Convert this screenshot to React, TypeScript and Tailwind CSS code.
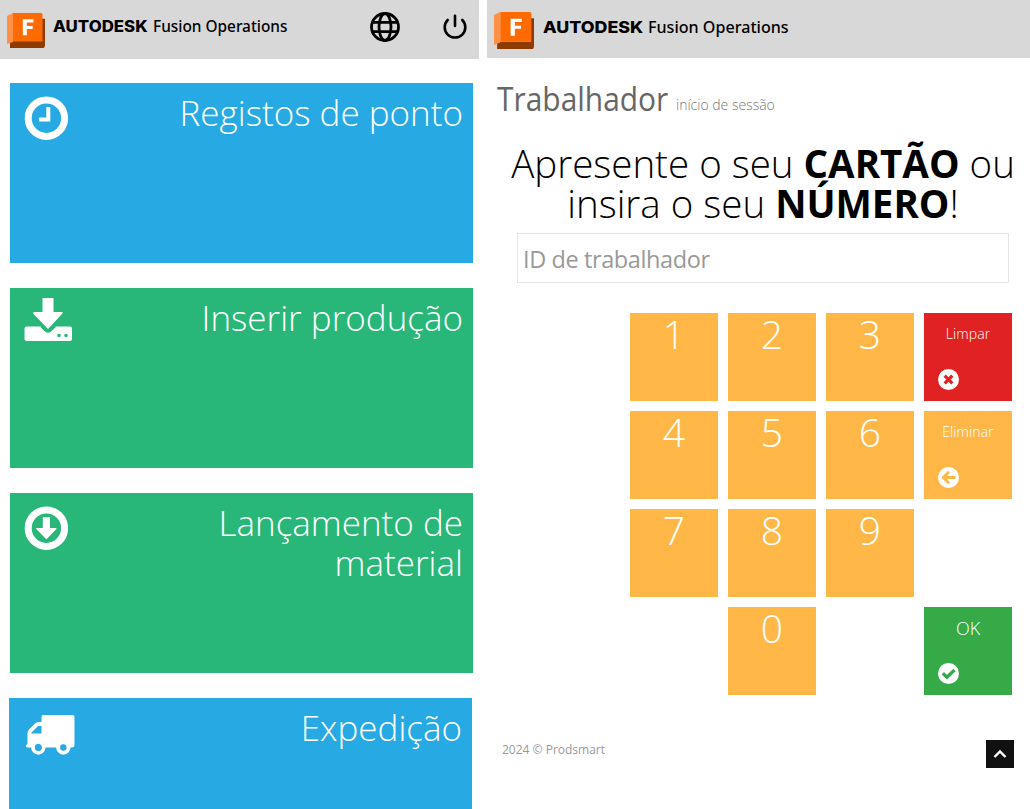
import React from "react";

const openSans = "font-['Open_Sans','Liberation_Sans',sans-serif]";

function FusionMark({ className }: { className: string }) {
  return (
    <svg viewBox="0 0 38 36" preserveAspectRatio="none" className={className}>
      <path d="M3 29H35V6H38V33Q38 36 36 36H3Z" fill="#8f3b00" />
      <path d="M0 3L6 0V30L0 32Z" fill="#ff9146" />
      <path d="M6 0H34Q35.500 0 35.500 1.500V29H6Z" fill="#ff6b00" />
      <path d="M3.500 31L6.500 29.500H35.500L35 30.500L33 36H5Q3.500 36 3.500 34.500Z" fill="#8f3b00" />
      <path d="M15.800 6.500H26.400V9.700H19.800V13.300H25.600V16.400H19.800V23H15.800Z" fill="#fff" />
    </svg>
  );
}

function ClockIcon() {
  return (
    <svg width="44" height="44" viewBox="0 0 44 44" fill="none">
      <circle cx="22.400" cy="22.200" r="18.200" stroke="#fff" strokeWidth="7" />
      <path d="M24.300 11V23.600H15" stroke="#fff" strokeWidth="4" />
    </svg>
  );
}

function InboxIcon() {
  return (
    <svg width="48" height="44" viewBox="0 0 48 44" fill="#fff">
      <path d="M18.500 0H29.500V14H38.500Q39 15 38 16L24 31L9.500 16Q8.500 14.500 10 14H18.500Z" />
      <path
        fillRule="evenodd"
        d="M2.500 28.500H17L21 32.700Q24 35.500 27 32.700L31.500 28.500H46Q48 28.500 48 30.500V41Q48 43 46 43H2.500Q0.500 43 0.500 41V30.500Q0.500 28.500 2.500 28.500ZM33.200 37.500a1.800 1.800 0 1 0 3.600 0a1.800 1.800 0 1 0-3.600 0ZM40.200 37.500a1.800 1.800 0 1 0 3.600 0a1.800 1.800 0 1 0-3.600 0Z"
      />
      <path d="M17 28.500L21.500 33Q24 35 26.500 33L31.500 28.500" fill="none" stroke="#28b779" strokeWidth="1.500" />
    </svg>
  );
}

function ArrowDownIcon() {
  return (
    <svg width="44" height="44" viewBox="0 0 44 44">
      <circle cx="22.400" cy="22.200" r="18.200" stroke="#fff" strokeWidth="7" fill="none" />
      <path d="M18.800 11.200H26V22H32.300L32.500 23L22.400 33.200L12.200 23L12.400 22H18.800Z" fill="#fff" />
    </svg>
  );
}

function TruckIcon() {
  return (
    <svg width="50" height="41" viewBox="0 0 50 41">
      <path
        fillRule="evenodd"
        fill="#fff"
        d="M17 0H46.500Q48.500 0 48.500 2V30Q48.500 32.500 45.500 32.500H2Q-0.500 32.500 0 30.500Q0 29.500 1.500 29V18Q1.500 16 3 14.500L9 8.500Q10.500 7 12.500 7H15.500V2Q15.500 0 17 0ZM15.500 11H12L5.500 17.500V18.500H15.500Z"
      />
      <circle cx="12.300" cy="32.500" r="5.200" fill="#27a9e3" stroke="#fff" strokeWidth="4" />
      <circle cx="37.300" cy="32.500" r="5.200" fill="#27a9e3" stroke="#fff" strokeWidth="4" />
      <circle cx="12.300" cy="32.500" r="3.400" fill="#27a9e3" />
    </svg>
  );
}

function RoundIcon({ color, children }: { color: string; children: React.ReactNode }) {
  return (
    <svg width="21" height="21" viewBox="0 0 21 21" fill="none" stroke={color} strokeWidth="3.300">
      <circle cx="10.500" cy="10.500" r="10.500" fill="#fff" stroke="none" />
      {children}
    </svg>
  );
}

function Tile({ color, icon, label }: { color: string; icon: React.ReactNode; label: string }) {
  return (
    <div className={`flex h-[180px] shrink-0 items-start justify-between pr-[10px] ${color}`}>
      {icon}
      <div className="w-[320px] pt-[10px] text-right text-[35px] leading-[40px] font-light text-white">{label}</div>
    </div>
  );
}

function Key({ n }: { n: string }) {
  return (
    <button className="block size-[88px] bg-[#ffb848] text-center">
      <span className="block h-[88px] pt-px text-[39px] leading-[40px] font-light text-white">{n}</span>
    </button>
  );
}

function Action({ color, label, labelClass, children }: { color: string; label: string; labelClass: string; children: React.ReactNode }) {
  return (
    <button className={`flex size-[88px] flex-col items-start pt-[11px] text-white ${color}`}>
      <span className={`block h-[45px] w-full text-center leading-[20px] ${labelClass}`}>{label}</span>
      <span className="ml-[14px]">{children}</span>
    </button>
  );
}

export default function App() {
  return (
    <div className={`flex h-[809px] w-[1030px] gap-2 overflow-hidden bg-white ${openSans}`}>
      <section className="w-[479px]">
        <header className="flex h-[59px] items-start bg-[#d8d8d8]">
          <FusionMark className="mt-[13px] ml-[7px] h-[35px] w-[38px]" />
          <div className="mt-[17px] ml-[8px] flex w-[237px] items-baseline leading-[20px] whitespace-nowrap text-black">
            <span className="w-[100px] origin-left scale-x-[1.085] font-[Inter,sans-serif] text-[15.500px] font-extrabold">AUTODESK</span>
            <span className="font-['Noto_Sans',sans-serif] text-[15.400px] font-medium">Fusion Operations</span>
          </div>
          <svg className="mt-[12px] ml-[80px]" width="30" height="30" viewBox="0 0 30 30" fill="none" stroke="#000" strokeWidth="2.800">
            <circle cx="15" cy="15" r="13.500" />
            <ellipse cx="15" cy="15" rx="6" ry="13.500" />
            <path d="M2.500 10.300H27.500M2.500 19.700H27.500" />
          </svg>
          <svg className="mt-[14px] ml-[43px]" width="24" height="25" viewBox="0 0 24 25" fill="none" stroke="#000" strokeWidth="2.600" strokeLinecap="round">
            <path d="M12 1.800V12M4.700 6A10.300 10.300 0 1 0 19.300 6" />
          </svg>
        </header>
        <main className="flex flex-col gap-[25px] pt-[24px] pr-[6px] pl-[10px]">
          <Tile color="bg-[#27a9e3]" label="Registos de ponto" icon={<span className="mt-[13px] ml-[14px]"><ClockIcon /></span>} />
          <Tile color="bg-[#28b779]" label="Inserir produção" icon={<span className="mt-[10px] ml-[14px]"><InboxIcon /></span>} />
          <Tile color="bg-[#28b779]" label="Lançamento de material" icon={<span className="mt-[13px] ml-[14px]"><ArrowDownIcon /></span>} />
          <div className="-ml-px pr-px">
            <Tile color="bg-[#27a9e3]" label="Expedição" icon={<span className="mt-[17px] ml-[17px]"><TruckIcon /></span>} />
          </div>
        </main>
      </section>

      <section className="w-[543px]">
        <header className="flex h-[58px] items-start bg-[#d8d8d8]">
          <FusionMark className="mt-[12px] ml-[7px] h-[37px] w-[40px]" />
          <div className="mt-[17px] ml-[9px] flex items-baseline leading-[20px] whitespace-nowrap text-black">
            <span className="w-[105px] origin-left scale-x-[1.095] font-[Inter,sans-serif] text-[16.300px] font-extrabold">AUTODESK</span>
            <span className="font-['Noto_Sans',sans-serif] text-[16.100px] font-medium">Fusion Operations</span>
          </div>
        </header>
        <div className="flex items-baseline pt-[20px] pl-[10px]">
          <h1 className="w-[179px] origin-left translate-y-px scale-x-[0.935] text-[32px] leading-[40px] text-[#666]">Trabalhador</h1>
          <small className="text-[14px] font-light text-[#777]">início de sessão</small>
        </div>
        <h2 className="mt-[25px] ml-[20px] w-[512px] text-center text-[38.500px] leading-[40px] font-light whitespace-nowrap text-black">
          Apresente o seu <b className="font-bold">CARTÃO</b> ou
          <br />
          insira o seu <b className="font-bold">NÚMERO</b>!
        </h2>
        <input
          placeholder="ID de trabalhador"
          className="mt-[10px] ml-[30px] block h-[50px] w-[492px] border border-[#e5e5e5] pt-[2px] pl-[5px] text-[23.500px] tracking-[-0.400px] placeholder:text-[#999]"
        />
        <div className="mt-[30px] ml-[143px] grid w-[382px] grid-cols-4 gap-[10px]">
          <Key n="1" />
          <Key n="2" />
          <Key n="3" />
          <Action color="bg-[#e02222]" label="Limpar" labelClass="text-[14px] font-[350] tracking-[0.100px]">
            <RoundIcon color="#e02222"><path d="M6.700 6.700L14.300 14.300M14.300 6.700L6.700 14.300" /></RoundIcon>
          </Action>
          <Key n="4" />
          <Key n="5" />
          <Key n="6" />
          <Action color="bg-[#ffb848]" label="Eliminar" labelClass="text-[14px] font-[350] tracking-[0.100px]">
            <RoundIcon color="#ffb848"><path d="M17.500 10.500H6M11 4.800L5.300 10.500L11 16.200" strokeWidth="2.800" /></RoundIcon>
          </Action>
          <Key n="7" />
          <Key n="8" />
          <Key n="9" />
          <span />
          <span />
          <Key n="0" />
          <span />
          <Action color="bg-[#35aa47]" label="OK" labelClass="text-[18px] font-light">
            <RoundIcon color="#35aa47"><path d="M4.800 10.200L9 14.300L16.500 7" /></RoundIcon>
          </Action>
        </div>
        <footer className="mt-[45px] flex items-start justify-between pr-[16px] pl-[15px]">
          <span className="text-[12px] leading-[20px] text-[#999]">2024 © Prodsmart</span>
          <button className="flex size-[28px] items-center justify-center bg-[#111]">
            <svg width="14" height="10" viewBox="0 0 14 10" fill="none" stroke="#fff" strokeWidth="2.400">
              <path d="M1.500 8L7 2.500L12.500 8" />
            </svg>
          </button>
        </footer>
      </section>
    </div>
  );
}
